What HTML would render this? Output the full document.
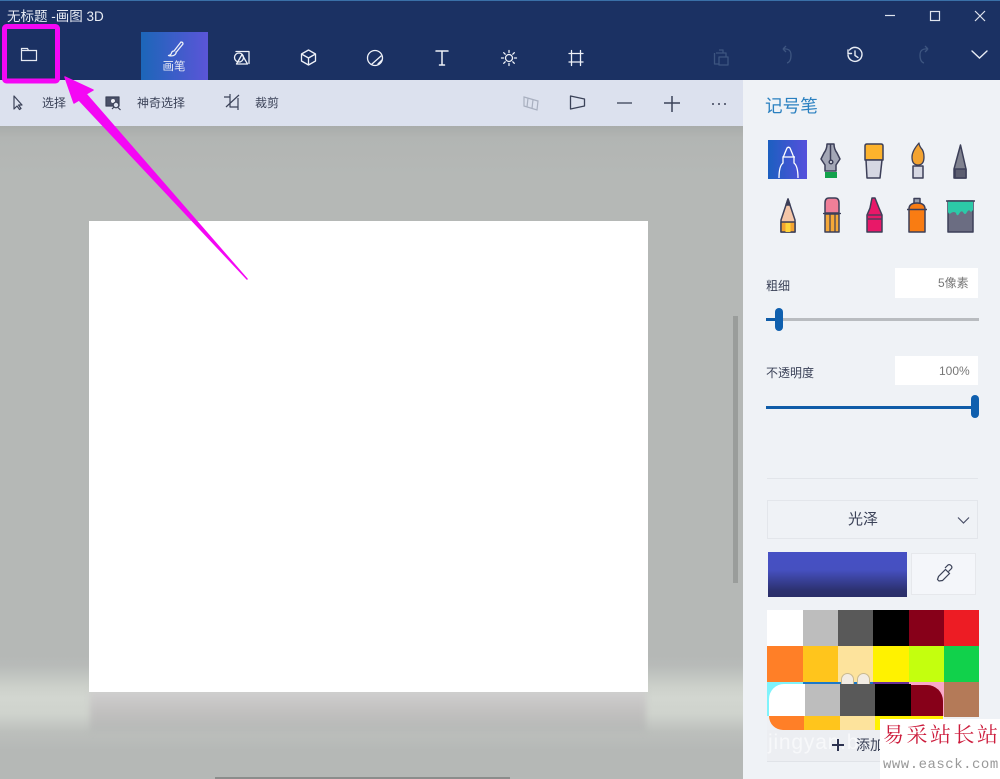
<!DOCTYPE html>
<html><head><meta charset="utf-8"><style>
html,body{margin:0;padding:0}
body{width:1000px;height:779px;overflow:hidden;position:relative;background:#b5b8b6;font-family:"Liberation Sans","Noto Sans CJK SC",sans-serif}
.a{position:absolute}
.t{position:absolute;white-space:nowrap;line-height:1}
</style></head><body>
<div class="a" style="left:0;top:126px;width:743px;height:653px;background:linear-gradient(#a9acaa 0,#b2b5b3 12px,#b5b8b6 50px,#b5b8b6 530px,#b8bbb9 540px,#cdd1cb 562px,#d2d6d0 572px,#cfd3cd 588px,#bcbfbc 606px,#b5b8b6 625px)"></div>
<div class="a" style="left:90px;top:690px;width:556px;height:42px;background:linear-gradient(#d0cfcf,#c0bfbe 24px,#b5b8b6 42px);filter:blur(3px)"></div>
<div class="a" style="left:89px;top:221px;width:559px;height:471px;background:#fff"></div>
<div class="a" style="left:215px;top:777px;width:295px;height:2px;background:#8b8d8c"></div>
<div class="a" style="left:733px;top:316px;width:5px;height:267px;background:#9a9d9b"></div>
<div class="a" style="left:0;top:0;width:1000px;height:80px;background:#1b3163"></div>
<div class="a" style="left:0;top:0;width:1000px;height:1px;background:#3a70a8"></div>
<div class="a" style="left:141px;top:32px;width:67px;height:48px;background:linear-gradient(90deg,#1c66b8,#5b55d8)"></div>
<div class="a" style="left:0;top:80px;width:743px;height:46px;background:#dce1ee"></div>
<div class="a" style="left:743px;top:80px;width:257px;height:699px;background:#eff2f6"></div>
<div class="t" style="left:7px;top:10px;font-size:13.5px;color:#e8ecf4">无标题 -画图 3D</div>
<div class="t" style="left:162.500px;top:61.500px;font-size:11.500px;color:#e6e9f5">画笔</div>
<div class="t" style="left:42px;top:97px;font-size:12px;color:#3b4258">选择</div>
<div class="t" style="left:137px;top:97px;font-size:12px;color:#3b4258">神奇选择</div>
<div class="t" style="left:255px;top:97px;font-size:12px;color:#3b4258">裁剪</div>
<div class="t" style="left:765px;top:98px;font-size:17.600px;color:#2a80c0">记号笔</div>
<div class="t" style="left:766px;top:280px;font-size:12px;color:#3b4258">粗细</div>
<div class="t" style="left:766px;top:367px;font-size:12px;color:#3b4258">不透明度</div>
<div class="a" style="left:895px;top:268px;width:83px;height:30px;background:#fff"></div>
<div class="a" style="left:895px;top:356px;width:83px;height:29px;background:#fff"></div>
<div class="t" style="left:938px;top:277px;font-size:12px;color:#777">5像素</div>
<div class="t" style="left:939px;top:365px;font-size:12px;color:#777">100%</div>
<div class="a" style="left:766px;top:318px;width:213px;height:3px;background:#b9bcc0"></div>
<div class="a" style="left:766px;top:318px;width:12px;height:3px;background:#0f5ca8"></div>
<div class="a" style="left:775px;top:308px;width:8px;height:23px;border-radius:4px;background:#0f5fae"></div>
<div class="a" style="left:766px;top:406px;width:212px;height:3px;background:#0f5ca8"></div>
<div class="a" style="left:971px;top:395px;width:8px;height:23px;border-radius:4px;background:#0f5fae"></div>
<div class="a" style="left:767px;top:478px;width:211px;height:1px;background:#e2e5ea"></div>
<div class="a" style="left:767px;top:500px;width:211px;height:39px;border:1px solid #e3e6eb;box-sizing:border-box"></div>
<div class="t" style="left:848px;top:512px;font-size:15px;color:#3b4258">光泽</div>
<div class="a" style="left:768px;top:552px;width:139px;height:45px;background:linear-gradient(#4650c4 0,#4650c0 40%,#2c3170 85%,#2a2e68)"></div>
<div class="a" style="left:911px;top:553px;width:65px;height:42px;background:#f4f6fa;border:1px solid #e6e8ec;box-sizing:border-box"></div>

<!-- swatches -->
<div class="a" style="left:767px;top:610px;width:212px;height:120px;background:#eef0f4"></div>
<div class="a" style="left:767px;top:610px;width:36px;height:36px;background:#fff"></div>
<div class="a" style="left:803px;top:610px;width:35px;height:36px;background:#bdbdbd"></div>
<div class="a" style="left:838px;top:610px;width:35px;height:36px;background:#595959"></div>
<div class="a" style="left:873px;top:610px;width:36px;height:36px;background:#000"></div>
<div class="a" style="left:909px;top:610px;width:35px;height:36px;background:#870019"></div>
<div class="a" style="left:944px;top:610px;width:35px;height:36px;background:#ed1c24"></div>
<div class="a" style="left:767px;top:646px;width:36px;height:36px;background:#ff7f27"></div>
<div class="a" style="left:803px;top:646px;width:35px;height:36px;background:#ffc51c"></div>
<div class="a" style="left:838px;top:646px;width:35px;height:36px;background:#fde39c"></div>
<div class="a" style="left:873px;top:646px;width:36px;height:36px;background:#fff200"></div>
<div class="a" style="left:909px;top:646px;width:35px;height:36px;background:#c4ff0e"></div>
<div class="a" style="left:944px;top:646px;width:35px;height:36px;background:#11d14b"></div>
<div class="a" style="left:767px;top:682px;width:36px;height:34px;background:#7ff3fb"></div>
<div class="a" style="left:803px;top:682px;width:70px;height:2px;background:#1c78c8"></div>
<div class="a" style="left:873px;top:682px;width:36px;height:2px;background:#6a2f9a"></div>
<div class="a" style="left:909px;top:682px;width:35px;height:34px;background:#f9a8c8"></div>
<div class="a" style="left:944px;top:682px;width:35px;height:35px;background:#b47a58"></div>
<div class="a" style="left:769px;top:684px;width:36px;height:32px;background:#fff;border-top-left-radius:15px"></div>
<div class="a" style="left:805px;top:684px;width:35px;height:32px;background:#bdbdbd"></div>
<div class="a" style="left:840px;top:684px;width:35px;height:32px;background:#595959"></div>
<div class="a" style="left:875px;top:684px;width:36px;height:32px;background:#000"></div>
<div class="a" style="left:911px;top:685px;width:32px;height:31px;background:#870019;border-top-right-radius:16px"></div>
<div class="a" style="left:769px;top:716px;width:35px;height:14px;background:#ff7f27;border-bottom-left-radius:14px"></div>
<div class="a" style="left:804px;top:716px;width:36px;height:14px;background:#ffc51c"></div>
<div class="a" style="left:840px;top:716px;width:35px;height:14px;background:#fde39c"></div>
<div class="a" style="left:875px;top:716px;width:68px;height:14px;background:#fff200"></div>
<div class="a" style="left:841px;top:673px;width:13px;height:11px;border-radius:7px 7px 0 0;background:#f2ece4;border:1px solid #c9b98f;border-bottom:0;box-sizing:border-box"></div>
<div class="a" style="left:857px;top:673px;width:13px;height:11px;border-radius:7px 7px 0 0;background:#f2ece4;border:1px solid #c9b98f;border-bottom:0;box-sizing:border-box"></div>
<div class="a" style="left:767px;top:730px;width:212px;height:32px;background:#eceef2;border-bottom:1px solid #e0e3e8;box-sizing:border-box"></div>
<div class="t" style="left:768px;top:732px;font-size:21px;color:#f7f8fa;letter-spacing:.8px">jingyan.b</div>
<div class="t" style="left:856px;top:738px;font-size:14px;color:#3b4258">添加</div>
<div class="a" style="left:880px;top:719px;width:120px;height:60px;background:#fff"></div>
<div class="t" style="left:883px;top:725px;font-size:21px;letter-spacing:2.5px;color:#cc1b3b;font-family:'Liberation Serif','Noto Serif CJK SC',serif">易采站长站</div>
<div class="t" style="left:883px;top:758px;font-size:14px;letter-spacing:.5px;color:#999;font-family:'Liberation Mono',monospace">www.easck.com</div>

<svg class="a" style="left:0;top:0" width="1000" height="779" viewBox="0 0 1000 779" fill="none">
<!-- title bar controls -->
<g stroke="#dfe4ee" stroke-width="1.2">
<path d="M885 15.500h10"/><rect x="930.500" y="11.500" width="9" height="9"/><path d="M975 11l10 10M985 11l-10 10"/>
</g>
<!-- file icon -->
<path d="M21.500 48.500h6l1 2h8v10h-15zM21.500 50.500h7" stroke="#e6eaf2" stroke-width="1.200"/>
<!-- tools -->
<g stroke="#eef1f8" stroke-width="1.300" stroke-linecap="round" stroke-linejoin="round">
<path d="M181 42l-7 9M183 44l-7 8.500M181 42q2 0 2 2M174 51q-2 0-2.500 2t-3 2.500q4 1 6-.5t1.500-3"/>
<circle cx="239" cy="57.500" r="4.500"/><path d="M236 51.500h13v12M242 54.500l-5.500 9.500h11z"/>
<path d="M308.500 50l7 4v7l-7 4-7-4v-7zM301.500 54l7 4 7-4M308.500 58v7"/>
<circle cx="375" cy="58" r="7.500"/><path d="M372 64l9-8M378 64l4-4" />
<path d="M436 51h12M442 51v14M439.500 65h5" stroke-width="1.500"/>
<circle cx="509" cy="58" r="3.500"/><path d="M509 50.500v2M509 63.500v2M501.500 58h2M514.500 58h2M503.700 52.700l1.500 1.500M512.800 61.800l1.500 1.500M514.300 52.700l-1.500 1.500M505.200 61.800l-1.500 1.500"/>
<path d="M569 53.500h14M569 62h14M571.500 50.500v15M580.500 50.500v15"/>
</g>
<g stroke="#3d5580" stroke-width="1.300" stroke-linejoin="round">
<path d="M716 53h10v4M719 50h4v3M714.500 53v11h4M719 57h9v8h-9z"/>
<path d="M783 49q8-1 8 6t-4 8M783 49l3-3M783 49l3 3"/>
<path d="M928 49q-8-1-8 6t4 8M928 49l-3-3M928 49l-3 3"/>
</g>
<g stroke="#e8ecf4" stroke-width="1.400" stroke-linecap="round">
<path d="M849.500 50a7 7 0 1 1-1.500 5M848 50v3.500h3.500M855 51v4.500l3 2"/>
<path d="M972 51l7.500 7 7.500-7"/>
</g>
<!-- options bar -->
<g stroke="#3b4258" stroke-width="1.200" stroke-linejoin="round">
<path d="M14 96v13l3-3 2.500 3.500 1.500-1-2.500-3.500h3.500z"/>
<path d="M106 97h13v9h-13z" fill="#4a5068"/><circle cx="113" cy="101" r="2" fill="#eef0f6" stroke="none"/><circle cx="116" cy="105" r="2.800" fill="#dce1ee"/><path d="M118 107.500l2.500 2.500M112 109l2-2"/>
<path d="M224 97h6M230 94v13h8M238 110V98M226 107l13-12" />
<path d="M570.500 96l14 3v7l-14 3z" stroke-width="1.300"/>
<path d="M617 103h15" stroke-width="1.300"/>
<path d="M664 103h16M672 96v16" stroke-width="1.500"/>
</g>
<path d="M524 97l14 4-1 9-13-4zM528 98l-1 9M533 99.500l-1 9" stroke="#a9b0c0" stroke-width="1.200"/>
<g fill="#3b4258"><circle cx="713" cy="104" r="1"/><circle cx="719" cy="104" r="1"/><circle cx="725" cy="104" r="1"/></g>
<!-- brushes row 1 -->
<defs><linearGradient id="b" x1="0" x2="1"><stop offset="0" stop-color="#1c5fc0"/><stop offset="1" stop-color="#5650dc"/></linearGradient></defs>
<rect x="768" y="140" width="39" height="39" fill="url(#b)"/>
<path d="M779 178q0-12 4-15v-6q1-1 1.500-3l2.500-6q1.500-1.500 3 0l2.500 6q.5 2 1.500 3v6q4 3 4 15M783 157h12" stroke="#fff" stroke-width="1.300"/>
<g stroke="#3c3f58" stroke-width="1.500" stroke-linejoin="round">
<!-- fountain pen -->
<path d="M827 144h7q0 5 3 9l3 6-4 6v6h-11v-6l-4-6 3-6q3-4 3-9z" fill="#a3a7b6"/><circle cx="831" cy="162" r="1.800" fill="#e8eaf2"/><path d="M830.500 144v16"/>
<rect x="825" y="172" width="12" height="6" fill="#12a14b" stroke="none"/>
<!-- flat brush -->
<path d="M867 144h14q2 0 2 2v14h-18v-14q0-2 2-2z" fill="#fdb32c"/><path d="M866 160l1 18h13l2-18z" fill="#d5d7e2"/>
<!-- round brush -->
<path d="M919 143q-7 8-7 14 0 8 6 8t6-8q0-6-3-9-2-3-2-5z" fill="#f3a331" stroke-width="1.300"/><path d="M913 166h10v12h-10z" fill="#d5d7e2"/>
<!-- marker -->
<path d="M960.500 145l5.500 24v9h-12v-9z" fill="#80828f"/><path d="M955 169h11v9h-11z" fill="#5c5e70"/>
</g>
<!-- brushes row 2 -->
<g stroke="#3c3f58" stroke-width="1.500" stroke-linejoin="round">
<path d="M788 199l7 21v12h-14v-12z" fill="#f4c6a8"/><path d="M786 205l2-6 2 6z" fill="#3c3f58"/><path d="M781 222h14v10h-14z" fill="#f3a331"/><path d="M785.500 223h5v9h-5z" fill="#ffd43a" stroke="none"/>
<path d="M825 213v-10q0-5 4-5h6q4 0 4 5v10z" fill="#ef7f98"/><path d="M825 214h14v18h-14z" fill="#f5a838"/><path d="M823 213.500h18M830 214v18M835 214v18" stroke-width="1.200"/>
<path d="M872 198h3l4 10 3 7v17h-15v-17l3-7z" fill="#e81868"/><path d="M868 215h14M868 219h14" stroke-width="1.200"/>
<path d="M914 198.500h6v5h-6z" fill="#9a9eac"/><path d="M909 209q0-6 8-6t8 6v23h-16z" fill="#f97c12"/><path d="M907 209.500h20"/>
<path d="M948 201h25v31h-25z" fill="#6b6d82"/><path d="M948 201h25v9q-2 3-3 1t-3 1q-2 4-4 0-2-2-4 2-2 3-3-1-2-2-5 0-2 2-3-1z" fill="#2cc9a8" stroke="none"/><path d="M946 201h29"/>
</g>
<!-- panel chevrons / picker -->
<path d="M958 517.500l5.500 5.500 5.500-5.500" stroke="#4a5068" stroke-width="1.200"/>
<path d="M939 581l-1.500-1.500 1-3 7-7 4 4-7 7zM945 568l3-3q1.500-1 3 .5t.5 3l-3 3" stroke="#3b4258" stroke-width="1.200"/>
<path d="M832 745h12M838 739v12" stroke="#2c3250" stroke-width="2"/>
<!-- magenta annotation -->
<rect x="4.500" y="26.500" width="53" height="54.500" rx="2" stroke="#f407f4" stroke-width="5"/>
<path d="M65 77L93 90 86 94 247 279 79 100 74 103z" fill="#f407f4" stroke="#f407f4" stroke-width="1.500" stroke-linejoin="round"/>
</svg>
</body></html>
